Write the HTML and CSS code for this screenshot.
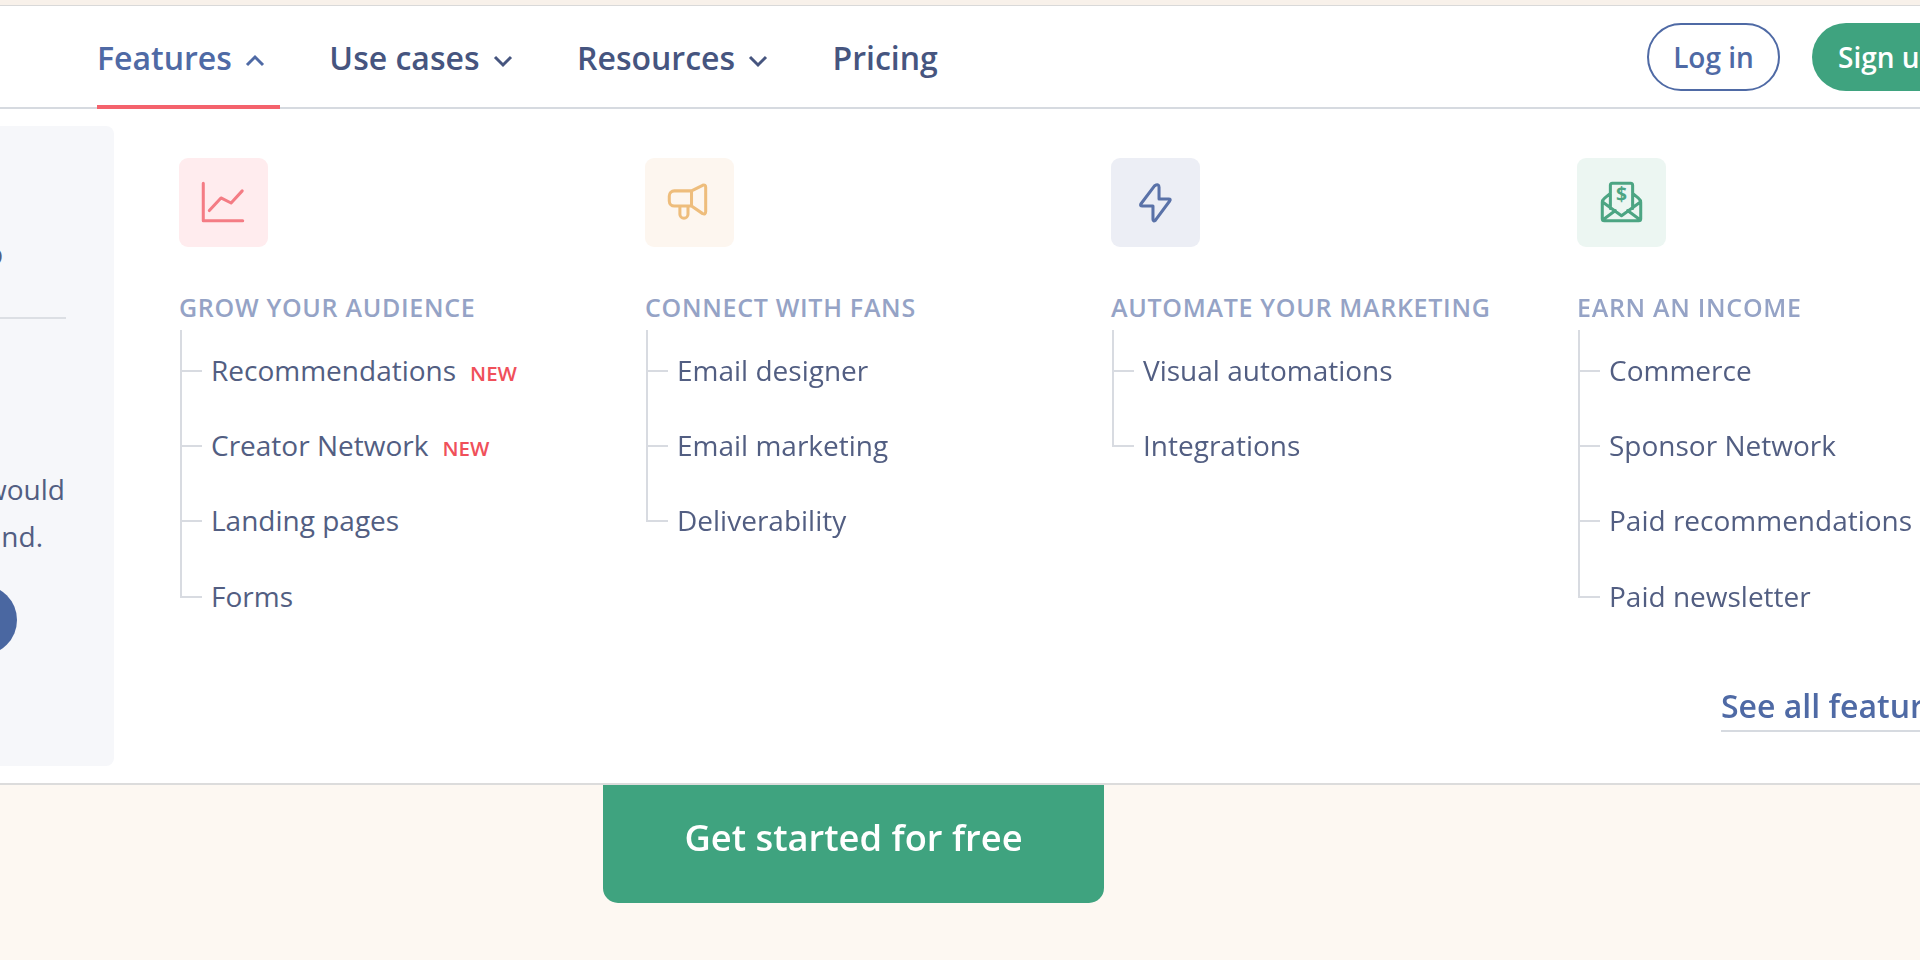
FILE: index.html
```html
<!DOCTYPE html>
<html lang="en">
<head>
    <meta charset="UTF-8">
    <title>Features menu</title>
    <link rel="stylesheet" href="styles.css">
</head>
<body>
    <div class="top-strip"></div>

    <header class="navbar">
        <nav class="nav-links">
            <a class="nav-item active">Features
                <svg class="chevron" viewBox="0 0 22 14"><path d="M3 11l8-8 8 8"/></svg>
            </a>
            <a class="nav-item">Use cases
                <svg class="chevron" viewBox="0 0 22 14"><path d="M3 3l8 8 8-8"/></svg>
            </a>
            <a class="nav-item">Resources
                <svg class="chevron" viewBox="0 0 22 14"><path d="M3 3l8 8 8-8"/></svg>
            </a>
            <a class="nav-item">Pricing</a>
        </nav>
        <div class="nav-actions">
            <a class="btn-login">Log in</a>
            <a class="btn-signup">Sign up</a>
        </div>
    </header>

    <section class="dropdown">
        <aside class="promo">
            <div class="promo-title">o</div>
            <div class="promo-rule"></div>
            <div class="promo-line">would</div>
            <div class="promo-line short">around.</div>
            <div class="promo-circle"></div>
        </aside>

        <div class="menu">
            <div class="columns">
                <div class="column">
                    <div class="tile tile-red">
                        <svg viewBox="0 0 88 88"><path d="M24 25v37h39M30 52l11.5-12.5 10 5 11-12"/></svg>
                    </div>
                    <h3>Grow your audience</h3>
                    <ul>
                        <li>Recommendations <span class="tag">NEW</span></li>
                        <li>Creator Network <span class="tag">NEW</span></li>
                        <li>Landing pages</li>
                        <li>Forms</li>
                    </ul>
                </div>
                <div class="column">
                    <div class="tile tile-orange">
                        <svg viewBox="0 0 88 88"><path d="M46 32.5H29a5 5 0 0 0-5 5v5a5 5 0 0 0 5 5h17zM46 32.5l11-5.5q3-1 3 2v24q0 3-3 2l-11-7.5M34.5 47.5v8a4 4 0 0 0 8 0v-8"/></svg>
                    </div>
                    <h3>Connect with fans</h3>
                    <ul>
                        <li>Email designer</li>
                        <li>Email marketing</li>
                        <li>Deliverability</li>
                    </ul>
                </div>
                <div class="column">
                    <div class="tile tile-blue">
                        <svg viewBox="0 0 88 88"><path d="M43 27.5L29.5 45.5q-1 2 1.5 2h10.5v13q0 3 2.500 1l14-19q1.500-2-1-2H47.500V29q0-4-4.500-1.500z"/></svg>
                    </div>
                    <h3>Automate your marketing</h3>
                    <ul>
                        <li>Visual automations</li>
                        <li>Integrations</li>
                    </ul>
                </div>
                <div class="column">
                    <div class="tile tile-green">
                        <svg viewBox="0 0 88 88">
                            <path d="M33 50V27q0-2 2-2h18q2 0 2 2v23M33 35l-6 5q-2 1.5-2 4v16q0 2 2 2h34q2 0 2-2V44q0-2.5-2-4l-6-5M26 44l18 13 18-13M27 60l11-8M61 60l-11-8"/>
                            <text x="44" y="43" text-anchor="middle">$</text>
                        </svg>
                    </div>
                    <h3>Earn an income</h3>
                    <ul>
                        <li>Commerce</li>
                        <li>Sponsor Network</li>
                        <li>Paid recommendations</li>
                        <li>Paid newsletter</li>
                    </ul>
                </div>
            </div>
            <a class="see-all">See all features</a>
        </div>
    </section>

    <main class="hero">
        <a class="btn-start">Get started for free</a>
    </main>
</body>
</html>
```

FILE: styles.css
```css
html, body {
    margin: 0;
    padding: 0;
    height: 960px;
    overflow: hidden;
}

body {
    width: 1920px;
    background-color: #fdf8f2;
    font-family: "Open Sans", sans-serif;
    color: #525e82;
    filter: blur(0.5px);
}

.top-strip {
    height: 5px;
    background-color: #f8f1ea;
}

.navbar {
    display: flex;
    justify-content: space-between;
    width: 2100px;
    height: 104px;
    box-sizing: border-box;
    background: #fff;
    border-top: 1px solid #d9d9d9;
    border-bottom: 2px solid #d6dae0;
}

.nav-links {
    display: flex;
    margin-left: 97px;
}

.nav-item {
    display: flex;
    align-items: center;
    gap: 12px;
    height: 103px;
    margin-right: 49px;
    padding: 3px 14.5px 0 0;
    box-sizing: border-box;
    border-bottom: 4px solid transparent;
    font-size: 32px;
    font-weight: 600;
    color: #46557f;
}

.nav-item.active {
    color: #4f6aa5;
    border-bottom-color: #f4626c;
}

.chevron {
    width: 22px;
    height: 14px;
    margin-top: 8px;
    fill: none;
    stroke: currentColor;
    stroke-width: 3;
}

.nav-actions {
    display: flex;
    align-items: center;
    gap: 32px;
    margin-right: 148px;
}

.btn-login,
.btn-signup {
    display: flex;
    align-items: center;
    height: 68px;
    border-radius: 34px;
    box-sizing: border-box;
    font-size: 28px;
    font-weight: 600;
}

.btn-login {
    justify-content: center;
    width: 133px;
    border: 2px solid #4f6aa5;
    color: #4f6aa5;
}

.btn-signup {
    width: 140px;
    padding-left: 26px;
    background: #3fa37f;
    color: #fff;
}

.dropdown {
    display: flex;
    width: 2300px;
    height: 676px;
    box-sizing: border-box;
    padding-top: 17px;
    background: #fff;
    border-bottom: 2px solid #dcdcdc;
}

.promo {
    width: 414px;
    height: 640px;
    margin-left: -300px;
    box-sizing: border-box;
    padding-right: 48px;
    border-radius: 8px;
    background: #f6f7fa;
    font-size: 28px;
    overflow: hidden;
}

.promo-title {
    margin-top: 107px;
    margin-right: 63px;
    text-align: right;
    font-size: 30px;
    font-weight: 600;
}

.promo-rule {
    margin-top: 43px;
    height: 2px;
    background: #dcdfe4;
}

.promo-line {
    margin-right: 1px;
    text-align: right;
    line-height: 47px;
}

.promo-rule + .promo-line {
    margin-top: 147px;
}

.promo-line.short {
    margin-right: 23px;
}

.promo-circle {
    width: 140px;
    height: 70px;
    margin-top: 25px;
    margin-left: 177px;
    border-radius: 35px;
    background: #4a67a1;
}

.menu {
    margin-left: 65px;
    padding-top: 32px;
}

.columns {
    display: grid;
    grid-template-columns: repeat(4, 466px);
}

.tile {
    display: flex;
    width: 89px;
    height: 89px;
    border-radius: 9px;
}

.tile svg {
    width: 89px;
    height: 89px;
    fill: none;
    stroke-width: 3;
    stroke-linecap: round;
    stroke-linejoin: round;
}

.tile-red { background: #ffecee; stroke: #f47c84; }
.tile-orange { background: #fdf6ef; stroke: #eebd7c; }
.tile-blue { background: #eceef5; stroke: #5a72a8; }
.tile-green { background: #ecf6f2; stroke: #4ca583; }

.tile text {
    font-family: "Open Sans", sans-serif;
    font-size: 19px;
    font-weight: 700;
    fill: #4ca583;
    stroke: none;
}

.column h3 {
    margin: 41.5px 0 8.5px;
    font-size: 25px;
    line-height: 36px;
    font-weight: 600;
    letter-spacing: 0.7px;
    text-transform: uppercase;
    color: #95a3c6;
}

.column ul {
    margin: 0;
    padding: 0;
    list-style: none;
}

.column li {
    position: relative;
    display: flex;
    align-items: baseline;
    gap: 6px;
    height: 75.2px;
    padding-left: 32px;
    line-height: 75px;
    font-size: 28px;
}

/* tree lines on the left of each link */
.column li::before {
    content: "";
    position: absolute;
    left: 1px;
    top: 0;
    width: 20px;
    height: 37px;
    border-left: 2px solid #d8dbe1;
    border-bottom: 2px solid #d8dbe1;
}

.column li:first-child::before {
    top: -3px;
    height: 40px;
}

.column li:not(:last-child)::after {
    content: "";
    position: absolute;
    left: 1px;
    top: 37px;
    height: 39px;
    border-left: 2px solid #d8dbe1;
}

.tag {
    margin-left: 8px;
    font-size: 20.5px;
    font-weight: 600;
    color: #f0505a;
}

.see-all {
    display: inline-block;
    margin-top: 50.5px;
    margin-left: 1542px;
    padding-bottom: 3px;
    border-bottom: 2px solid #d6dae0;
    font-size: 32px;
    font-weight: 600;
    color: #4f6aa5;
}

.btn-start {
    display: flex;
    align-items: center;
    justify-content: center;
    width: 501px;
    height: 118px;
    margin-left: 603px;
    padding-bottom: 15px;
    box-sizing: border-box;
    border-radius: 0 0 15px 15px;
    background: #3fa37f;
    color: #fff;
    font-size: 36.3px;
    font-weight: 600;
}
```
